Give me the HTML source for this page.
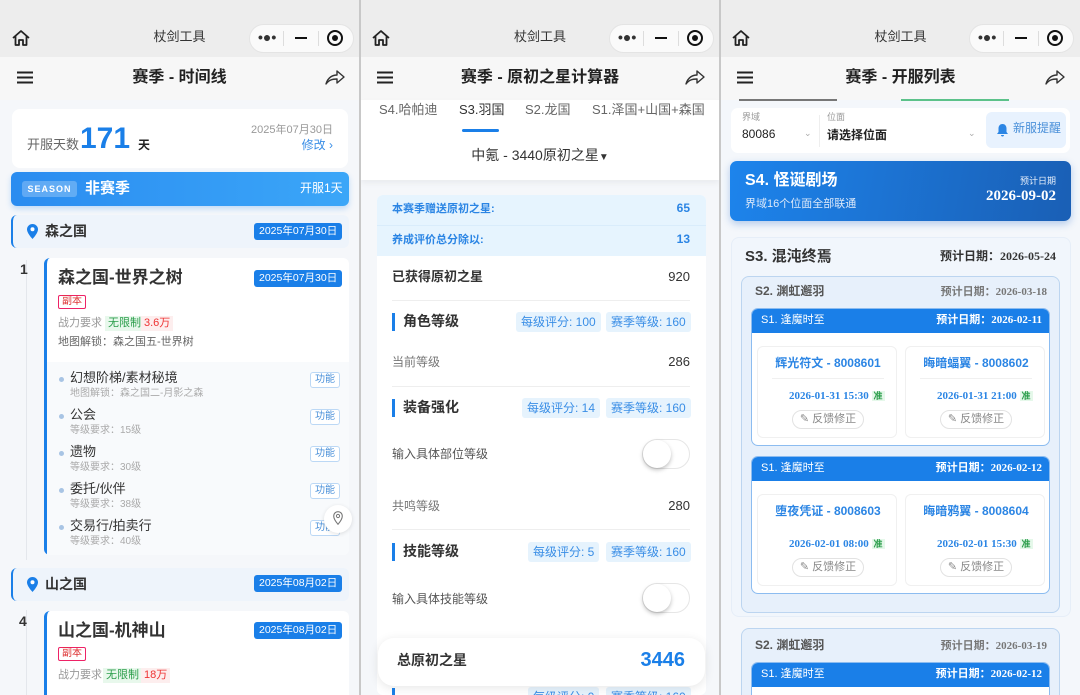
<!DOCTYPE html>
<html><head><meta charset="utf-8">
<style>
*{box-sizing:border-box;margin:0;padding:0}
body{width:1080px;height:695px;overflow:hidden;background:#c8c8c8;font-family:"Liberation Sans","Noto Sans CJK SC",sans-serif;color:#333;position:relative;line-height:1.3}
.a{position:absolute;white-space:nowrap}
.panel{position:absolute;top:0;height:695px;background:#f5f7fa;overflow:hidden}
.top{position:absolute;left:0;top:0;width:100%;height:57px;background:#ededed}
.nav{position:absolute;left:0;top:57px;width:100%;height:43px;background:#f7f7f7}
.cap{position:absolute;top:24px;width:105px;height:29px;background:#fafafa;border-radius:15px;border:1px solid #e4e4e4}
.t13{font-size:13px}
.badge{background:#1a7fe8;color:#fff;font-size:10.5px;border-radius:3px;padding:1px 5px;line-height:15px}
.tagf{border:1px solid #bcd8f5;color:#4a90d9;font-size:10px;border-radius:3px;padding:0 4px;line-height:14px;background:#fff}
.gtag{font-size:11px;padding:0 3px;line-height:15px}
.bt{font-size:12px;background:#e6f3fd;color:#3a8ee6;border-radius:3px;padding:0 5px;line-height:20px}
.tog{position:absolute;width:48px;height:30px;border-radius:15px;border:1px solid #e6e6e6;background:#fff}
.tog:after{content:"";position:absolute;left:0;top:0;width:28px;height:28px;border-radius:50%;background:#fff;box-shadow:0 2px 4px rgba(0,0,0,.25)}
.srf{font-family:"Liberation Serif",serif;font-weight:bold}
.sc{position:absolute;background:#fff;border:1px solid #f0f0f0;border-radius:6px;width:140px;height:92px}
.fb{position:absolute;left:34px;top:63px;width:72px;height:19px;border:1px solid #e2e2e2;border-radius:10px;font-size:11px;color:#888;text-align:center;line-height:17px}
</style></head><body>

<!-- PANEL 1 -->
<div class="panel" style="left:0;width:359px">
 <div class="top">
  <svg class="a" style="left:11px;top:29px" width="20" height="18" viewBox="0 0 20 18"><path d="M2 9 L10 2 L18 9 M4.5 7 V16 H8 V11 H12 V16 H15.5 V7" fill="none" stroke="#222" stroke-width="1.8" stroke-linejoin="round"/></svg>
  <div class="a t13" style="left:0;width:359px;text-align:center;top:29px;color:#333">杖剑工具</div>
  <div class="cap" style="left:249px"></div>
  <div class="a" style="left:258px;top:28px;font-size:14px;font-weight:bold">•●•</div>
  <div class="a" style="left:283px;top:31px;width:1px;height:15px;background:#ddd"></div>
  <div class="a" style="left:295px;top:37px;width:12px;height:2px;background:#111"></div>
  <div class="a" style="left:318px;top:31px;width:1px;height:15px;background:#ddd"></div>
  <div class="a" style="left:327px;top:30px;width:16px;height:16px;border:2px solid #111;border-radius:50%"></div>
  <div class="a" style="left:332px;top:35px;width:6px;height:6px;background:#111;border-radius:50%"></div>
 </div>
 <div class="nav">
  <svg class="a" style="left:17px;top:14px" width="16" height="13"><path d="M0 1.5H16M0 6.5H16M0 11.5H16" stroke="#222" stroke-width="2"/></svg>
  <div class="a" style="left:0;width:359px;text-align:center;top:11px;font-size:16px;font-weight:bold;color:#222">赛季 - 时间线</div>
  <svg class="a" style="left:325px;top:12px" width="20" height="16" viewBox="0 0 20 16"><path d="M1 15 C3 8 8 6 12 6 V2 L19 8 L12 14 V10 C7 10 4 11 1 15Z" fill="none" stroke="#333" stroke-width="1.4" stroke-linejoin="round"/></svg>
 </div>
 <div class="a" style="left:12px;top:109px;width:336px;height:59px;background:#fff;border-radius:8px"></div>
 <div class="a" style="left:27px;top:137px;font-size:13px;color:#666">开服天数</div>
 <div class="a" style="left:80px;top:122px;font-size:30px;font-weight:bold;color:#1a7fe8;line-height:34px">171</div>
 <div class="a" style="left:138px;top:138px;font-size:12px;font-weight:bold;color:#222">天</div>
 <div class="a" style="left:200px;width:133px;text-align:right;top:123px;font-size:11px;color:#999">2025年07月30日</div>
 <div class="a" style="left:200px;width:133px;text-align:right;top:138px;font-size:12px;color:#3a8ee6">修改 ›</div>
 <div class="a" style="left:11px;top:172px;width:338px;height:34px;border-radius:6px;background:linear-gradient(90deg,#2a8cf0,#3ba6f8);box-shadow:0 3px 6px rgba(40,140,240,.25)"></div>
 <div class="a" style="left:22px;top:181px;width:55px;height:16px;background:rgba(255,255,255,.25);border-radius:3px;color:#fff;font-size:9px;font-weight:bold;letter-spacing:1px;text-align:center;line-height:16px">SEASON</div>
 <div class="a" style="left:85px;top:179px;color:#fff;font-size:15px;font-weight:bold">非赛季</div>
 <div class="a" style="left:300px;top:181px;color:#fff;font-size:12px">开服1天</div>
 <div class="a" style="left:26px;top:260px;width:1px;height:300px;background:#e4e7ec"></div>
 <div class="a" style="left:11px;top:215px;width:338px;height:33px;background:#eef4fb;border-left:2px solid #1a7fe8;border-radius:6px"></div>
 <svg class="a" style="left:27px;top:224px" width="11" height="15" viewBox="0 0 11 15"><path d="M5.5 0C2.5 0 0 2.4 0 5.4 0 9.3 5.5 15 5.5 15S11 9.3 11 5.4C11 2.4 8.5 0 5.5 0Z" fill="#1a7fe8"/><circle cx="5.5" cy="5.3" r="2" fill="#fff"/></svg>
 <div class="a" style="left:45px;top:222px;font-size:14px;font-weight:bold;color:#333">森之国</div>
 <div class="a badge" style="left:254px;top:223px">2025年07月30日</div>
 <div class="a" style="left:20px;top:260px;font-size:14px;font-weight:bold">1</div>
 <div class="a" style="left:44px;top:258px;width:305px;height:297px;background:#fff;border-left:3px solid #1a7fe8;border-radius:6px"></div>
 <div class="a" style="left:58px;top:267px;font-size:17px;font-weight:bold;color:#333">森之国-世界之树</div>
 <div class="a badge" style="left:254px;top:270px">2025年07月30日</div>
 <div class="a" style="left:58px;top:295px;border:1px solid #e26;color:#d33;font-size:10px;border-radius:2px;padding:0 3px;line-height:12px">副本</div>
 <div class="a" style="left:58px;top:316px;font-size:11px;color:#999">战力要求</div>
 <div class="a gtag" style="left:105px;top:316px;background:#e8f8ec;color:#2a9d4a">无限制</div>
 <div class="a gtag" style="left:141px;top:316px;background:#fdeeee;color:#e33">3.6万</div>
 <div class="a" style="left:58px;top:335px;font-size:11px;color:#666">地图解锁：森之国五-世界树</div>
 <div class="a" style="left:47px;top:362px;width:302px;height:193px;background:#f8fafc;border-radius:0 0 6px 0"></div>
 <div class="a" style="left:59px;top:0">
  <div class="a" style="left:0;top:377px;width:5px;height:5px;border-radius:50%;background:#a8c4e4"></div>
  <div class="a" style="left:11px;top:370px;font-size:13px;color:#333">幻想阶梯/素材秘境</div>
  <div class="a" style="left:11px;top:387px;font-size:10px;color:#aaa">地图解锁：森之国二-月影之森</div>
  <div class="a tagf" style="left:251px;top:372px">功能</div>
  <div class="a" style="left:0;top:414px;width:5px;height:5px;border-radius:50%;background:#a8c4e4"></div>
  <div class="a" style="left:11px;top:407px;font-size:13px;color:#333">公会</div>
  <div class="a" style="left:11px;top:424px;font-size:10px;color:#aaa">等级要求：15级</div>
  <div class="a tagf" style="left:251px;top:409px">功能</div>
  <div class="a" style="left:0;top:451px;width:5px;height:5px;border-radius:50%;background:#a8c4e4"></div>
  <div class="a" style="left:11px;top:444px;font-size:13px;color:#333">遗物</div>
  <div class="a" style="left:11px;top:461px;font-size:10px;color:#aaa">等级要求：30级</div>
  <div class="a tagf" style="left:251px;top:446px">功能</div>
  <div class="a" style="left:0;top:488px;width:5px;height:5px;border-radius:50%;background:#a8c4e4"></div>
  <div class="a" style="left:11px;top:481px;font-size:13px;color:#333">委托/伙伴</div>
  <div class="a" style="left:11px;top:498px;font-size:10px;color:#aaa">等级要求：38级</div>
  <div class="a tagf" style="left:251px;top:483px">功能</div>
  <div class="a" style="left:0;top:525px;width:5px;height:5px;border-radius:50%;background:#a8c4e4"></div>
  <div class="a" style="left:11px;top:518px;font-size:13px;color:#333">交易行/拍卖行</div>
  <div class="a" style="left:11px;top:535px;font-size:10px;color:#aaa">等级要求：40级</div>
  <div class="a tagf" style="left:251px;top:520px">功能</div>
 </div>
 <div class="a" style="left:324px;top:505px;width:28px;height:28px;border-radius:50%;background:#fff;box-shadow:0 1px 4px rgba(0,0,0,.12)"></div>
 <svg class="a" style="left:333px;top:511px" width="10" height="14" viewBox="0 0 10 14"><path d="M5 .7C2.6.7.7 2.6.7 5 .7 8.3 5 13.3 5 13.3S9.3 8.3 9.3 5C9.3 2.6 7.4.7 5 .7Z" fill="none" stroke="#777" stroke-width="1.1"/><circle cx="5" cy="5" r="1.6" fill="none" stroke="#777"/></svg>
 <div class="a" style="left:11px;top:568px;width:338px;height:33px;background:#eef4fb;border-left:2px solid #1a7fe8;border-radius:6px"></div>
 <svg class="a" style="left:27px;top:577px" width="11" height="15" viewBox="0 0 11 15"><path d="M5.5 0C2.5 0 0 2.4 0 5.4 0 9.3 5.5 15 5.5 15S11 9.3 11 5.4C11 2.4 8.5 0 5.5 0Z" fill="#1a7fe8"/><circle cx="5.5" cy="5.3" r="2" fill="#fff"/></svg>
 <div class="a" style="left:45px;top:575px;font-size:14px;font-weight:bold;color:#333">山之国</div>
 <div class="a badge" style="left:254px;top:575px">2025年08月02日</div>
 <div class="a" style="left:26px;top:610px;width:1px;height:90px;background:#e4e7ec"></div>
 <div class="a" style="left:19px;top:612px;font-size:14px;font-weight:bold">4</div>
 <div class="a" style="left:44px;top:611px;width:305px;height:100px;background:#fff;border-left:3px solid #1a7fe8;border-radius:6px"></div>
 <div class="a" style="left:58px;top:620px;font-size:17px;font-weight:bold;color:#333">山之国-机神山</div>
 <div class="a badge" style="left:254px;top:622px">2025年08月02日</div>
 <div class="a" style="left:58px;top:647px;border:1px solid #e26;color:#d33;font-size:10px;border-radius:2px;padding:0 3px;line-height:12px">副本</div>
 <div class="a" style="left:58px;top:668px;font-size:11px;color:#999">战力要求</div>
 <div class="a gtag" style="left:103px;top:668px;background:#e8f8ec;color:#2a9d4a">无限制</div>
 <div class="a gtag" style="left:141px;top:668px;background:#fdeeee;color:#e33">18万</div>
</div>

<!-- PANEL 2 -->
<div class="panel" style="left:361px;width:358px">
 <div class="top">
  <svg class="a" style="left:10px;top:29px" width="20" height="18" viewBox="0 0 20 18"><path d="M2 9 L10 2 L18 9 M4.5 7 V16 H8 V11 H12 V16 H15.5 V7" fill="none" stroke="#222" stroke-width="1.8" stroke-linejoin="round"/></svg>
  <div class="a t13" style="left:0;width:358px;text-align:center;top:29px">杖剑工具</div>
  <div class="cap" style="left:248px"></div>
  <div class="a" style="left:257px;top:28px;font-size:14px;font-weight:bold">•●•</div>
  <div class="a" style="left:282px;top:31px;width:1px;height:15px;background:#ddd"></div>
  <div class="a" style="left:294px;top:37px;width:12px;height:2px;background:#111"></div>
  <div class="a" style="left:317px;top:31px;width:1px;height:15px;background:#ddd"></div>
  <div class="a" style="left:326px;top:30px;width:16px;height:16px;border:2px solid #111;border-radius:50%"></div>
  <div class="a" style="left:331px;top:35px;width:6px;height:6px;background:#111;border-radius:50%"></div>
 </div>
 <div class="nav">
  <svg class="a" style="left:16px;top:14px" width="16" height="13"><path d="M0 1.5H16M0 6.5H16M0 11.5H16" stroke="#222" stroke-width="2"/></svg>
  <div class="a" style="left:0;width:358px;text-align:center;top:11px;font-size:16px;font-weight:bold;color:#222">赛季 - 原初之星计算器</div>
  <svg class="a" style="left:324px;top:12px" width="20" height="16" viewBox="0 0 20 16"><path d="M1 15 C3 8 8 6 12 6 V2 L19 8 L12 14 V10 C7 10 4 11 1 15Z" fill="none" stroke="#333" stroke-width="1.4" stroke-linejoin="round"/></svg>
 </div>
 <div class="a" style="left:0;top:100px;width:358px;height:80px;background:#fff;box-shadow:0 3px 6px rgba(0,0,0,.05)"></div>
 <div class="a" style="left:18px;top:102px;font-size:13px;color:#666">S4.哈帕迪</div>
 <div class="a" style="left:98px;top:102px;font-size:13px;color:#333">S3.羽国</div>
 <div class="a" style="left:101px;top:129px;width:37px;height:3px;background:#1a7fe8;border-radius:2px"></div>
 <div class="a" style="left:164px;top:102px;font-size:13px;color:#666">S2.龙国</div>
 <div class="a" style="left:231px;top:102px;font-size:13px;color:#666">S1.泽国+山国+森国</div>
 <div class="a" style="left:0;width:358px;text-align:center;top:146px;font-size:14px;color:#333">中氪 - 3440原初之星<span style="font-size:10px">▼</span></div>
 <div class="a" style="left:16px;top:195px;width:329px;height:500px;background:#fff;border-radius:6px"></div>
 <div class="a" style="left:16px;top:195px;width:329px;height:61px;background:#e6f4fe;border-radius:6px 6px 0 0"></div>
 <div class="a" style="left:16px;top:225px;width:329px;height:1px;background:#d9ecfb"></div>
 <div class="a" style="left:31px;top:202px;font-size:11px;font-weight:bold;color:#2b85e4">本赛季赠送原初之星:</div>
 <div class="a" style="left:250px;width:79px;text-align:right;top:201px;font-size:12px;font-weight:bold;color:#2b85e4">65</div>
 <div class="a" style="left:31px;top:233px;font-size:11px;font-weight:bold;color:#2b85e4">养成评价总分除以:</div>
 <div class="a" style="left:250px;width:79px;text-align:right;top:232px;font-size:12px;font-weight:bold;color:#2b85e4">13</div>
 <div class="a" style="left:31px;top:269px;font-size:13px;font-weight:bold;color:#333">已获得原初之星</div>
 <div class="a" style="left:250px;width:79px;text-align:right;top:269px;font-size:13px">920</div>
 <div class="a" style="left:31px;top:300px;width:298px;height:1px;background:#eee"></div>
 <div class="a" style="left:31px;top:313px;width:3px;height:18px;background:#1a7fe8"></div>
 <div class="a" style="left:42px;top:312px;font-size:14px;font-weight:bold">角色等级</div>
 <div class="a bt" style="left:155px;top:312px">每级评分: 100</div>
 <div class="a bt" style="left:245px;top:312px">赛季等级: 160</div>
 <div class="a" style="left:31px;top:355px;font-size:12px;color:#777">当前等级</div>
 <div class="a" style="left:250px;width:79px;text-align:right;top:354px;font-size:13px">286</div>
 <div class="a" style="left:31px;top:386px;width:298px;height:1px;background:#eee"></div>
 <div class="a" style="left:31px;top:399px;width:3px;height:18px;background:#1a7fe8"></div>
 <div class="a" style="left:42px;top:398px;font-size:14px;font-weight:bold">装备强化</div>
 <div class="a bt" style="left:161px;top:398px">每级评分: 14</div>
 <div class="a bt" style="left:245px;top:398px">赛季等级: 160</div>
 <div class="a" style="left:31px;top:447px;font-size:12px;color:#555">输入具体部位等级</div>
 <div class="tog" style="left:281px;top:439px"></div>
 <div class="a" style="left:31px;top:499px;font-size:12px;color:#777">共鸣等级</div>
 <div class="a" style="left:250px;width:79px;text-align:right;top:498px;font-size:13px">280</div>
 <div class="a" style="left:31px;top:529px;width:298px;height:1px;background:#eee"></div>
 <div class="a" style="left:31px;top:543px;width:3px;height:18px;background:#1a7fe8"></div>
 <div class="a" style="left:42px;top:542px;font-size:14px;font-weight:bold">技能等级</div>
 <div class="a bt" style="left:167px;top:542px">每级评分: 5</div>
 <div class="a bt" style="left:245px;top:542px">赛季等级: 160</div>
 <div class="a" style="left:31px;top:592px;font-size:12px;color:#555">输入具体技能等级</div>
 <div class="tog" style="left:281px;top:583px"></div>
 <div class="a" style="left:31px;top:688px;width:3px;height:10px;background:#1a7fe8"></div>
 <div class="a bt" style="left:167px;top:687px">每级评分: 0</div>
 <div class="a bt" style="left:245px;top:687px">赛季等级: 160</div>
 <div class="a" style="left:17px;top:638px;width:327px;height:48px;background:#fff;border-radius:16px;box-shadow:0 2px 10px rgba(0,0,0,.1)"></div>
 <div class="a" style="left:36px;top:651px;font-size:14px;font-weight:bold">总原初之星</div>
 <div class="a" style="left:240px;width:84px;text-align:right;top:647px;font-size:20px;font-weight:bold;color:#1a7fe8">3446</div>
</div>

<!-- PANEL 3 -->
<div class="panel" style="left:721px;width:359px;background:#f4f7fb">
 <div class="top">
  <svg class="a" style="left:10px;top:29px" width="20" height="18" viewBox="0 0 20 18"><path d="M2 9 L10 2 L18 9 M4.5 7 V16 H8 V11 H12 V16 H15.5 V7" fill="none" stroke="#222" stroke-width="1.8" stroke-linejoin="round"/></svg>
  <div class="a t13" style="left:0;width:359px;text-align:center;top:29px">杖剑工具</div>
  <div class="cap" style="left:248px"></div>
  <div class="a" style="left:257px;top:28px;font-size:14px;font-weight:bold">•●•</div>
  <div class="a" style="left:282px;top:31px;width:1px;height:15px;background:#ddd"></div>
  <div class="a" style="left:294px;top:37px;width:12px;height:2px;background:#111"></div>
  <div class="a" style="left:317px;top:31px;width:1px;height:15px;background:#ddd"></div>
  <div class="a" style="left:326px;top:30px;width:16px;height:16px;border:2px solid #111;border-radius:50%"></div>
  <div class="a" style="left:331px;top:35px;width:6px;height:6px;background:#111;border-radius:50%"></div>
 </div>
 <div class="nav">
  <svg class="a" style="left:16px;top:14px" width="16" height="13"><path d="M0 1.5H16M0 6.5H16M0 11.5H16" stroke="#222" stroke-width="2"/></svg>
  <div class="a" style="left:0;width:359px;text-align:center;top:11px;font-size:16px;font-weight:bold;color:#222">赛季 - 开服列表</div>
  <svg class="a" style="left:324px;top:12px" width="20" height="16" viewBox="0 0 20 16"><path d="M1 15 C3 8 8 6 12 6 V2 L19 8 L12 14 V10 C7 10 4 11 1 15Z" fill="none" stroke="#333" stroke-width="1.4" stroke-linejoin="round"/></svg>
 </div>
 <div class="a" style="left:18px;top:99px;width:98px;height:2px;background:#777"></div>
 <div class="a" style="left:180px;top:99px;width:108px;height:2px;background:#5cc28a"></div>
 <div class="a" style="left:10px;top:108px;width:339px;height:45px;background:#fff;border-radius:7px"></div>
 <div class="a" style="left:21px;top:112px;font-size:9px;color:#999">界域</div>
 <div class="a" style="left:21px;top:127px;font-size:12px;color:#222">80086</div>
 <div class="a" style="left:83px;top:128px;font-size:9px;color:#aaa">⌄</div>
 <div class="a" style="left:98px;top:115px;width:1px;height:32px;background:#eee"></div>
 <div class="a" style="left:106px;top:112px;font-size:9px;color:#999">位面</div>
 <div class="a" style="left:106px;top:128px;font-size:12px;font-weight:bold;color:#222">请选择位面</div>
 <div class="a" style="left:247px;top:128px;font-size:9px;color:#aaa">⌄</div>
 <div class="a" style="left:265px;top:112px;width:80px;height:36px;background:#e8f2fe;border-radius:6px"></div>
 <svg class="a" style="left:275px;top:123px" width="13" height="14" viewBox="0 0 13 14"><path d="M6.5 1C4 1 2.5 3 2.5 5.5V9L1 11H12L10.5 9V5.5C10.5 3 9 1 6.5 1ZM5 12H8C8 13 7.3 13.5 6.5 13.5S5 13 5 12Z" fill="#2b85e4"/></svg>
 <div class="a" style="left:292px;top:121px;font-size:12px;color:#4a90d9">新服提醒</div>
 <div class="a" style="left:9px;top:161px;width:341px;height:60px;border-radius:7px;background:linear-gradient(100deg,#1d84ec,#1a5fb5);box-shadow:0 3px 8px rgba(26,100,200,.3)"></div>
 <div class="a" style="left:24px;top:171px;font-size:16px;font-weight:bold;color:#fff">S4. 怪诞剧场</div>
 <div class="a" style="left:24px;top:197px;font-size:11px;color:#dce9fa">界域16个位面全部联通</div>
 <div class="a" style="left:250px;width:85px;text-align:right;top:176px;font-size:9px;color:#e8f0fb">预计日期</div>
 <div class="a srf" style="left:200px;width:135px;text-align:right;top:187px;font-size:15px;color:#fff">2026-09-02</div>
 <div class="a" style="left:10px;top:237px;width:340px;height:380px;background:#f1f6fc;border:1px solid #e6eef8;border-radius:8px"></div>
 <div class="a" style="left:24px;top:247px;font-size:15px;font-weight:bold;color:#333">S3. 混沌终焉</div>
 <div class="a" style="left:180px;width:155px;text-align:right;top:249px;font-size:12px;font-weight:bold;color:#333">预计日期：<span class="srf">2026-05-24</span></div>
 <div class="a" style="left:20px;top:276px;width:319px;height:337px;background:#e7f0fb;border:1px solid #bcd5f0;border-radius:8px"></div>
 <div class="a" style="left:34px;top:284px;font-size:12px;font-weight:bold;color:#555">S2. 渊虹邂羽</div>
 <div class="a" style="left:180px;width:146px;text-align:right;top:285px;font-size:11px;font-weight:bold;color:#777">预计日期：<span class="srf">2026-03-18</span></div>

 <div class="a" style="left:30px;top:308px;width:299px;height:138px;background:#fff;border:1px solid #8cbcf0;border-radius:7px;overflow:hidden">
  <div class="a" style="left:0;top:0;width:299px;height:24px;background:#1a7fe8"></div>
  <div class="a" style="left:9px;top:4px;font-size:11px;color:#fff">S1. 逢魔时至</div>
  <div class="a" style="left:150px;width:140px;text-align:right;top:4px;font-size:11px;font-weight:bold;color:#fff">预计日期：<span class="srf">2026-02-11</span></div>
  <div class="sc" style="left:5px;top:37px">
   <div class="a" style="left:0;width:140px;text-align:center;top:9px;font-size:12px;font-weight:bold;color:#2b85e4">辉光符文 - 8008601</div>
   <div class="a" style="left:14px;top:31px;width:112px;height:1px;background:#f0f0f0"></div>
   <div class="a srf" style="left:31px;top:42px;font-size:11px;color:#2b85e4">2026-01-31 15:30 <span style="background:#e5f8ea;color:#2a9d4a;font-size:9px;padding:0 2px">准</span></div>
   <div class="fb">✎ 反馈修正</div>
  </div>
  <div class="sc" style="left:153px;top:37px">
   <div class="a" style="left:0;width:140px;text-align:center;top:9px;font-size:12px;font-weight:bold;color:#2b85e4">晦暗蝠翼 - 8008602</div>
   <div class="a" style="left:14px;top:31px;width:112px;height:1px;background:#f0f0f0"></div>
   <div class="a srf" style="left:31px;top:42px;font-size:11px;color:#2b85e4">2026-01-31 21:00 <span style="background:#e5f8ea;color:#2a9d4a;font-size:9px;padding:0 2px">准</span></div>
   <div class="fb">✎ 反馈修正</div>
  </div>
 </div>

 <div class="a" style="left:30px;top:456px;width:299px;height:138px;background:#fff;border:1px solid #8cbcf0;border-radius:7px;overflow:hidden">
  <div class="a" style="left:0;top:0;width:299px;height:24px;background:#1a7fe8"></div>
  <div class="a" style="left:9px;top:4px;font-size:11px;color:#fff">S1. 逢魔时至</div>
  <div class="a" style="left:150px;width:140px;text-align:right;top:4px;font-size:11px;font-weight:bold;color:#fff">预计日期：<span class="srf">2026-02-12</span></div>
  <div class="sc" style="left:5px;top:37px">
   <div class="a" style="left:0;width:140px;text-align:center;top:9px;font-size:12px;font-weight:bold;color:#2b85e4">堕夜凭证 - 8008603</div>
   <div class="a srf" style="left:31px;top:42px;font-size:11px;color:#2b85e4">2026-02-01 08:00 <span style="background:#e5f8ea;color:#2a9d4a;font-size:9px;padding:0 2px">准</span></div>
   <div class="fb">✎ 反馈修正</div>
  </div>
  <div class="sc" style="left:153px;top:37px">
   <div class="a" style="left:0;width:140px;text-align:center;top:9px;font-size:12px;font-weight:bold;color:#2b85e4">晦暗鸦翼 - 8008604</div>
   <div class="a srf" style="left:31px;top:42px;font-size:11px;color:#2b85e4">2026-02-01 15:30 <span style="background:#e5f8ea;color:#2a9d4a;font-size:9px;padding:0 2px">准</span></div>
   <div class="fb">✎ 反馈修正</div>
  </div>
 </div>

 <div class="a" style="left:20px;top:628px;width:319px;height:80px;background:#e7f0fb;border:1px solid #bcd5f0;border-radius:8px"></div>
 <div class="a" style="left:34px;top:638px;font-size:12px;font-weight:bold;color:#555">S2. 渊虹邂羽</div>
 <div class="a" style="left:180px;width:146px;text-align:right;top:639px;font-size:11px;font-weight:bold;color:#777">预计日期：<span class="srf">2026-03-19</span></div>
 <div class="a" style="left:30px;top:662px;width:299px;height:40px;background:#fff;border:1px solid #8cbcf0;border-radius:7px;overflow:hidden">
  <div class="a" style="left:0;top:0;width:299px;height:24px;background:#1a7fe8"></div>
  <div class="a" style="left:9px;top:4px;font-size:11px;color:#fff">S1. 逢魔时至</div>
  <div class="a" style="left:150px;width:140px;text-align:right;top:4px;font-size:11px;font-weight:bold;color:#fff">预计日期：<span class="srf">2026-02-12</span></div>
 </div>
</div>
</body></html>
